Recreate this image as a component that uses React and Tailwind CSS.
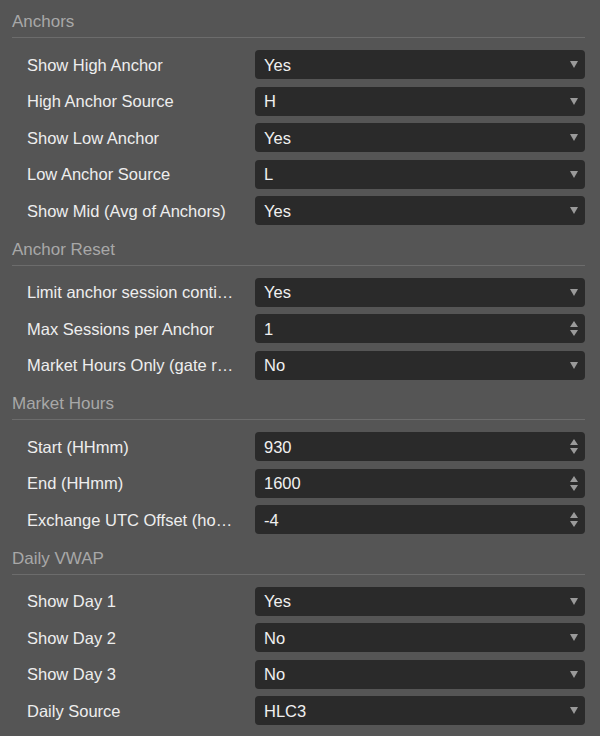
import React from "react";

const sections = [
  {
    title: "Anchors",
    rows: [
      ["Show High Anchor", "Yes", "select"],
      ["High Anchor Source", "H", "select"],
      ["Show Low Anchor", "Yes", "select"],
      ["Low Anchor Source", "L", "select"],
      ["Show Mid (Avg of Anchors)", "Yes", "select"],
    ],
  },
  {
    title: "Anchor Reset",
    rows: [
      ["Limit anchor session continuation", "Yes", "select"],
      ["Max Sessions per Anchor", "1", "number"],
      ["Market Hours Only (gate reset)", "No", "select"],
    ],
  },
  {
    title: "Market Hours",
    rows: [
      ["Start (HHmm)", "930", "number"],
      ["End (HHmm)", "1600", "number"],
      ["Exchange UTC Offset (hours)", "-4", "number"],
    ],
  },
  {
    title: "Daily VWAP",
    rows: [
      ["Show Day 1", "Yes", "select"],
      ["Show Day 2", "No", "select"],
      ["Show Day 3", "No", "select"],
      ["Daily Source", "HLC3", "select"],
    ],
  },
];

function DownArrow() {
  return (
    <svg width="8" height="7" viewBox="0 0 8 7" className="block">
      <polygon points="0,0 8,0 4,7" fill="#9a9a9a" />
    </svg>
  );
}

function Spinner() {
  return (
    <div className="flex flex-col items-center gap-[3px]">
      <svg width="8" height="6" viewBox="0 0 8 6" className="block">
        <polygon points="4,0 8,6 0,6" fill="#9a9a9a" />
      </svg>
      <svg width="8" height="6" viewBox="0 0 8 6" className="block">
        <polygon points="0,0 8,0 4,6" fill="#9a9a9a" />
      </svg>
    </div>
  );
}

function Row({ label, value, kind }) {
  return (
    <div className="flex items-center h-[29px] pl-[15px]">
      <div className="w-[210px] truncate text-[16.5px] leading-[20px] text-[#eeeeee]">
        {label}
      </div>
      <div className="ml-[18px] flex-1 h-[29px] rounded-[4px] bg-[#2a2a2a] flex items-center justify-between pl-[9px] pr-[7px]">
        <span className="text-[16.5px] leading-[20px] text-[#f0f0f0]">{value}</span>
        {kind === "select" ? <DownArrow /> : <Spinner />}
      </div>
    </div>
  );
}

export default function App() {
  return (
    <div
      className="w-[600px] h-[736px] bg-[#555555] overflow-hidden pl-[12px] pr-[15px] pt-[12px] flex flex-col gap-[14.5px]"
      style={{ fontFamily: '"Liberation Sans", Arial, sans-serif' }}
    >
      {sections.map((s) => (
        <div key={s.title} className="flex flex-col">
          <div className="text-[17px] leading-[20px] text-[#a8a8a8] pb-[5px] border-b border-[#6c6c6c]">
            {s.title}
          </div>
          <div className="mt-[12px] flex flex-col gap-[7.5px]">
            {s.rows.map(([l, v, k]) => (
              <Row key={l} label={l} value={v} kind={k} />
            ))}
          </div>
        </div>
      ))}
    </div>
  );
}
